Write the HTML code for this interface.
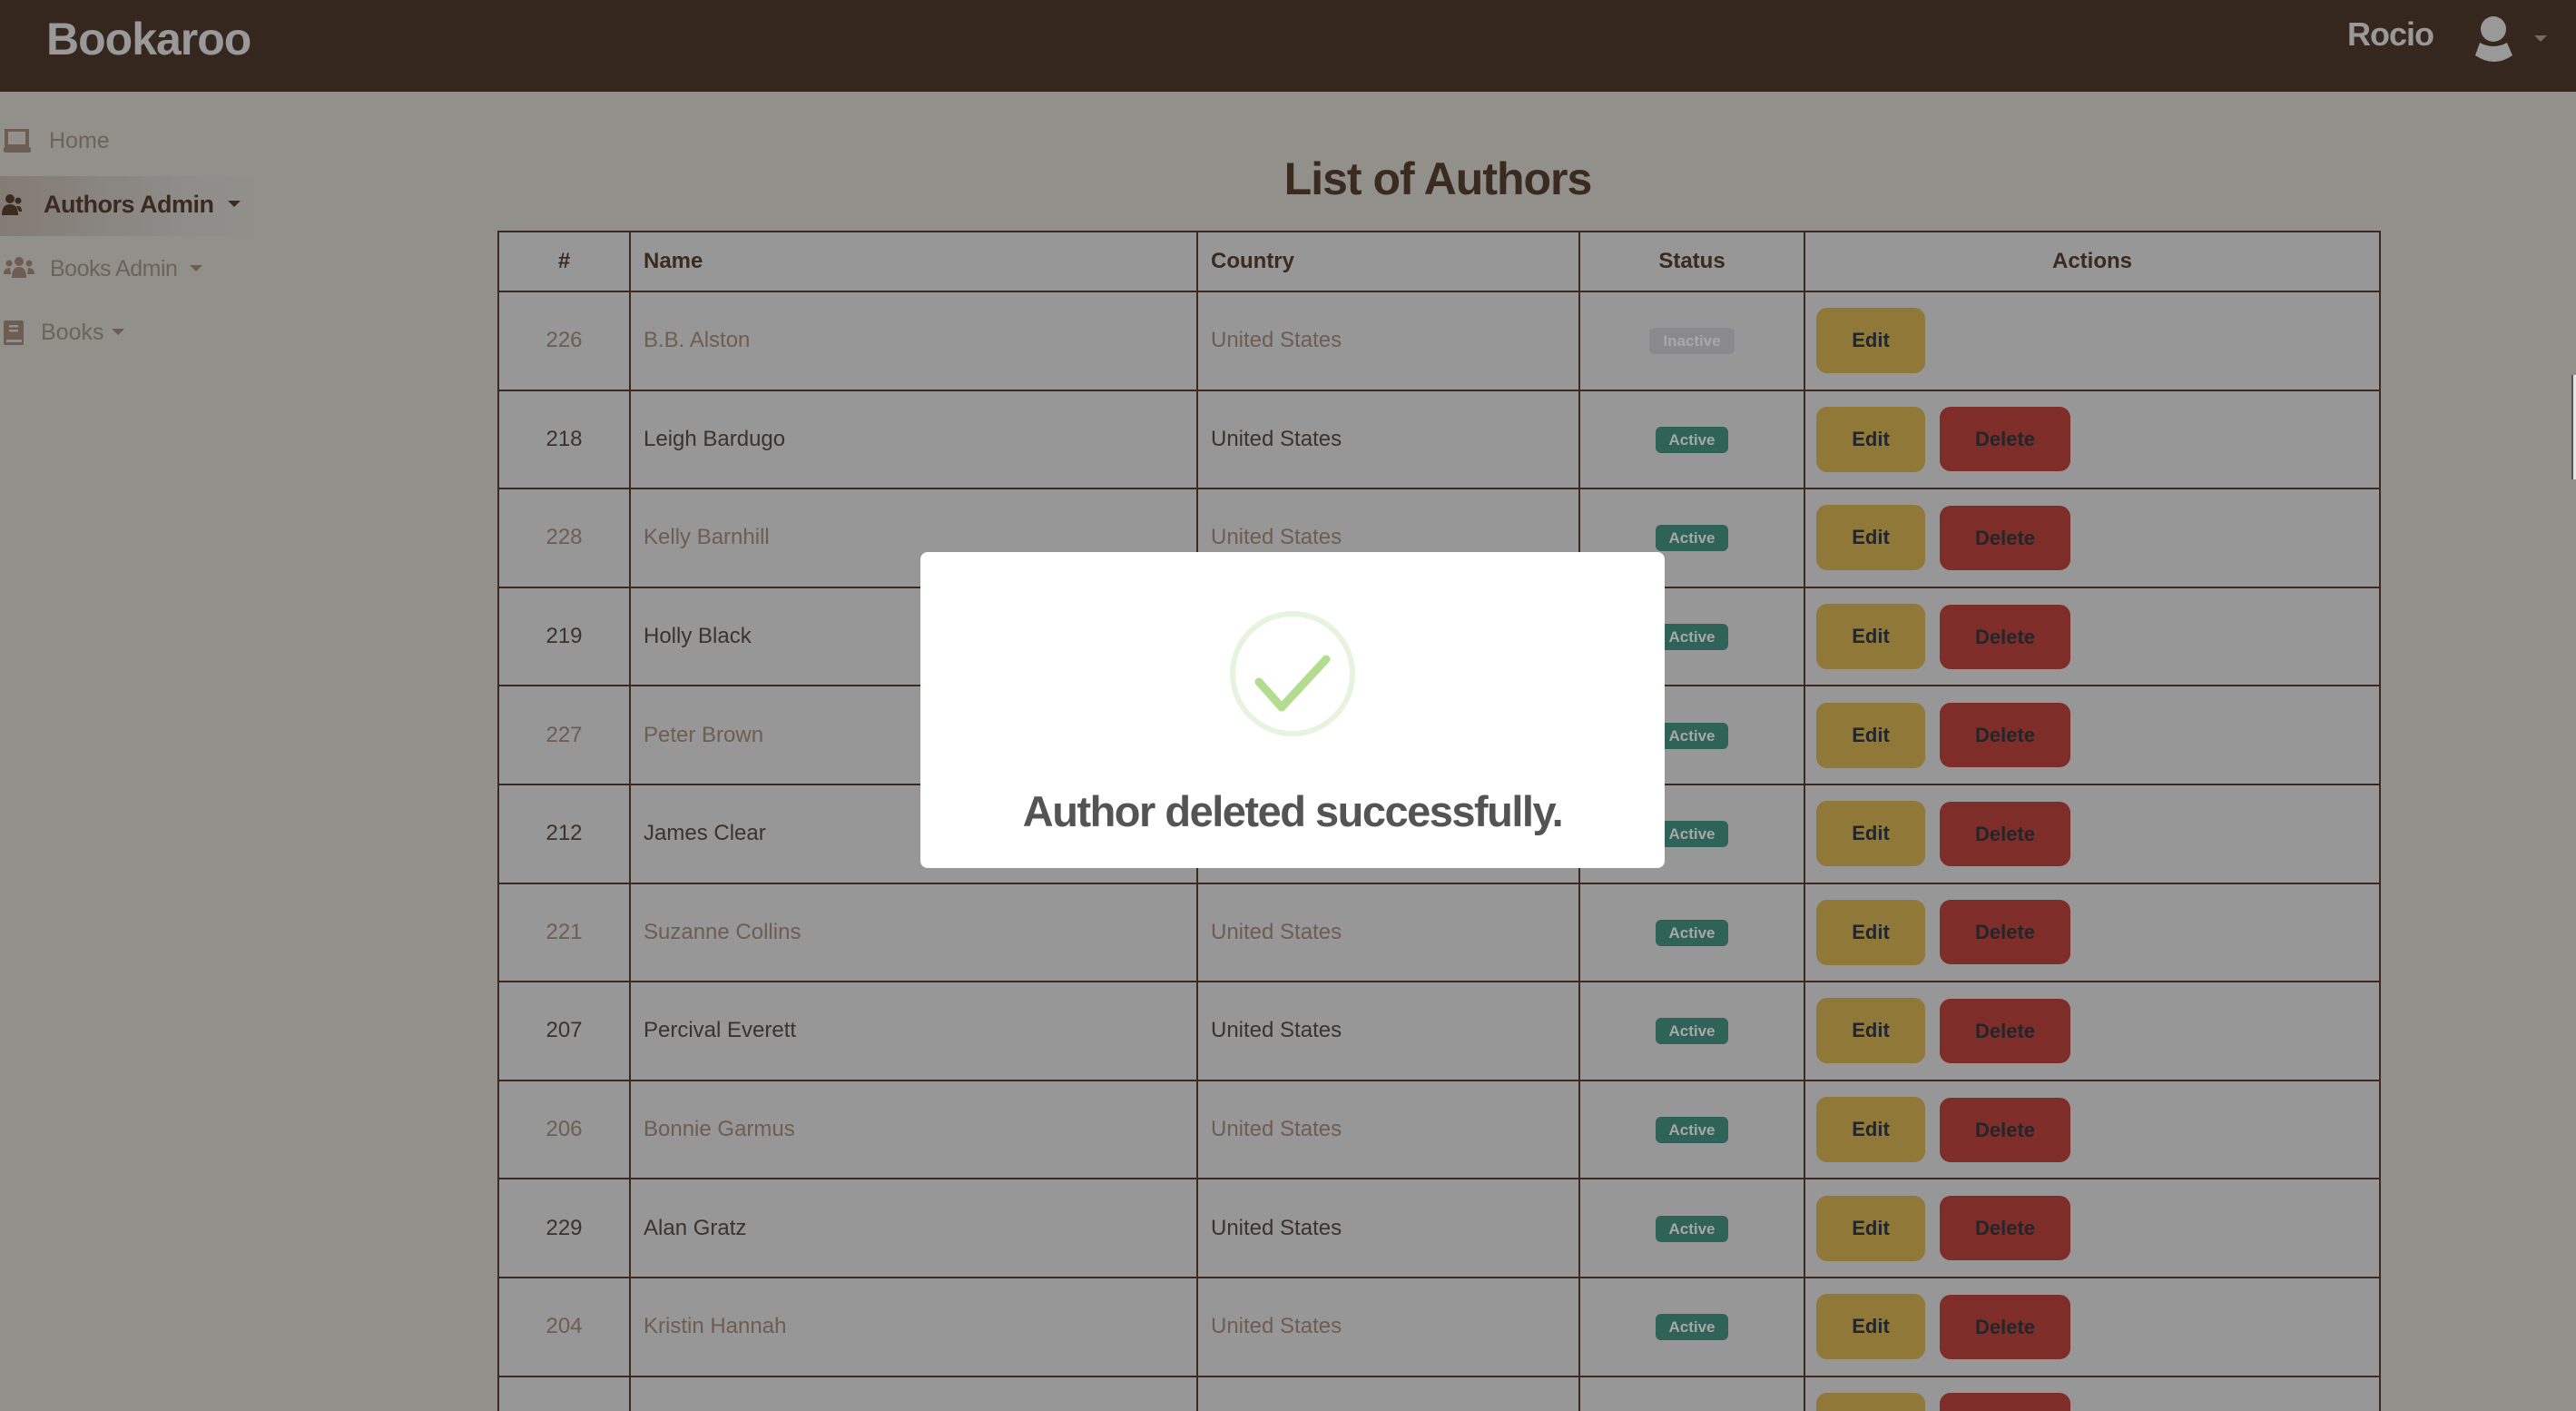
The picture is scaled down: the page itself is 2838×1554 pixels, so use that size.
<!DOCTYPE html>
<html><head><meta charset="utf-8"><style>
*{margin:0;padding:0;box-sizing:border-box}
html{width:2838px;height:1554px;overflow:hidden}
body{width:2838px;height:1554px;overflow:hidden;background:#91908b;font-family:"Liberation Sans",sans-serif;position:relative}
.nav{position:absolute;left:0;top:0;width:2838px;height:101px;background:#36271e}
.logo{position:absolute;left:51px;top:14px;font-size:50px;font-weight:bold;color:#999;letter-spacing:-1px}
.rocio{position:absolute;left:2586px;top:17px;font-size:36px;font-weight:bold;color:#999;letter-spacing:-1px}
.side{position:absolute;color:#6e635b;font-size:25px}
.hl{position:absolute;left:0;top:194px;width:292px;height:66px;background:linear-gradient(90deg,#837b75,#8e8d89 70%,#91908b)}
h1{position:absolute;left:0;width:3168px;top:168px;text-align:center;font-size:50px;color:#3a2a20;font-weight:bold;letter-spacing:-1px}
table{position:absolute;left:548px;top:254px;border-collapse:collapse;background:#979797;table-layout:fixed;width:2073px}
td,th{border:2px solid #3a2a20;font-size:24px;height:108.6px;vertical-align:middle;white-space:nowrap;overflow:hidden}
th{height:66px;color:#3a2a1f;font-weight:bold}
td.n{text-align:center}
td.nm,td.c{padding-left:14px}
td.s{text-align:center}
td.a{padding-left:12px}
th.l{text-align:left;padding-left:14px}
tr.o td{color:#6e5d52}
tr.e td{color:#3a332e}
.b{display:inline-block;width:80px;height:29px;line-height:29px;border-radius:6px;background:#2f6358;color:#a8a8a8;font-size:17px;font-weight:bold;text-align:center}
.b.i{background:#8a8a8e;color:#a8a8a8;width:94px}
.ed,.de{display:inline-block;height:72px;line-height:72px;border-radius:12px;text-align:center;font-size:22px;font-weight:bold;color:#22262b;vertical-align:middle}
.ed{width:120px;background:#8f7838}
.de{width:144px;height:71px;background:#7e2d28;margin-left:16px}
.modal{position:absolute;left:1014px;top:608px;width:820px;height:348px;background:#fff;border-radius:8px}
.msg{position:absolute;left:0;width:820px;top:258px;text-align:center;font-size:47px;font-weight:bold;color:#545454;letter-spacing:-1.5px}
</style></head><body>
<div class="nav">
<div class="logo">Bookaroo</div>
<div class="rocio">Rocio</div>
<svg style="position:absolute;left:2726px;top:17px" width="44" height="52" viewBox="0 0 44 52"><circle cx="21" cy="15" r="14" fill="#999"/><path d="M6 30 Q21 38 36 30 L42 44 Q22 58 1 44 Z" fill="#999"/></svg>
<svg style="position:absolute;left:2792px;top:39px" width="14" height="8"><path d="M0 0H14L7 7Z" fill="#77695e"/></svg>
</div>
<div class="hl"></div>
<svg style="position:absolute;left:4px;top:142px" width="32" height="28" viewBox="0 0 32 28"><rect x="3" y="1" width="23" height="18" fill="none" stroke="#6e5d52" stroke-width="4"/><rect x="0" y="20" width="30" height="6" rx="2" fill="#6e5d52"/></svg>
<div class="side" style="left:54px;top:141px">Home</div>
<svg style="position:absolute;left:0;top:213px" width="24" height="26" viewBox="0 0 24 26"><circle cx="11" cy="6" r="5" fill="#3a2a20"/><circle cx="20" cy="8" r="3.5" fill="#3a2a20"/><path d="M2 24 Q2 12 11 12 Q20 12 20 24Z" fill="#3a2a20"/><path d="M18 14 Q24 13 24 20 H21Z" fill="#3a2a20"/></svg>
<div class="side" style="left:48px;top:210px;font-weight:bold;color:#3a2a20;font-size:27px;letter-spacing:-0.5px">Authors Admin</div>
<svg style="position:absolute;left:251px;top:221px" width="14" height="8"><path d="M0 0H14L7 7Z" fill="#3a2a20"/></svg>
<svg style="position:absolute;left:4px;top:282px" width="34" height="26" viewBox="0 0 34 26"><circle cx="17" cy="6" r="5" fill="#6e5d52"/><circle cx="6" cy="8" r="3.5" fill="#6e5d52"/><circle cx="28" cy="8" r="3.5" fill="#6e5d52"/><path d="M9 24 Q9 12 17 12 Q25 12 25 24Z" fill="#6e5d52"/><path d="M0 20 Q0 13 7 13 L8 20Z M34 20 Q34 13 27 13 L26 20Z" fill="#6e5d52"/></svg>
<div class="side" style="left:55px;top:282px;letter-spacing:-0.5px">Books Admin</div>
<svg style="position:absolute;left:209px;top:292px" width="14" height="8"><path d="M0 0H14L7 7Z" fill="#6e5d52"/></svg>
<svg style="position:absolute;left:4px;top:353px" width="24" height="28" viewBox="0 0 24 28"><rect x="0" y="0" width="22" height="27" rx="2" fill="#6e5d52"/><rect x="6" y="5" width="10" height="2.5" fill="#91908b"/><rect x="6" y="10" width="10" height="2.5" fill="#91908b"/><rect x="3" y="21" width="17" height="3" fill="#91908b"/></svg>
<div class="side" style="left:45px;top:352px">Books</div>
<svg style="position:absolute;left:123px;top:362px" width="14" height="8"><path d="M0 0H14L7 7Z" fill="#6e5d52"/></svg>
<h1>List of Authors</h1>
<table>
<colgroup><col style="width:145px"><col style="width:625px"><col style="width:421px"><col style="width:248px"><col style="width:634px"></colgroup>
<tr><th>#</th><th class="l">Name</th><th class="l">Country</th><th>Status</th><th>Actions</th></tr>
<tr class="o"><td class="n">226</td><td class="nm">B.B. Alston</td><td class="c">United States</td><td class="s"><span class="b i">Inactive</span></td><td class="a"><span class="ed">Edit</span></td></tr>
<tr class="e"><td class="n">218</td><td class="nm">Leigh Bardugo</td><td class="c">United States</td><td class="s"><span class="b">Active</span></td><td class="a"><span class="ed">Edit</span><span class="de">Delete</span></td></tr>
<tr class="o"><td class="n">228</td><td class="nm">Kelly Barnhill</td><td class="c">United States</td><td class="s"><span class="b">Active</span></td><td class="a"><span class="ed">Edit</span><span class="de">Delete</span></td></tr>
<tr class="e"><td class="n">219</td><td class="nm">Holly Black</td><td class="c">United States</td><td class="s"><span class="b">Active</span></td><td class="a"><span class="ed">Edit</span><span class="de">Delete</span></td></tr>
<tr class="o"><td class="n">227</td><td class="nm">Peter Brown</td><td class="c">United States</td><td class="s"><span class="b">Active</span></td><td class="a"><span class="ed">Edit</span><span class="de">Delete</span></td></tr>
<tr class="e"><td class="n">212</td><td class="nm">James Clear</td><td class="c">United States</td><td class="s"><span class="b">Active</span></td><td class="a"><span class="ed">Edit</span><span class="de">Delete</span></td></tr>
<tr class="o"><td class="n">221</td><td class="nm">Suzanne Collins</td><td class="c">United States</td><td class="s"><span class="b">Active</span></td><td class="a"><span class="ed">Edit</span><span class="de">Delete</span></td></tr>
<tr class="e"><td class="n">207</td><td class="nm">Percival Everett</td><td class="c">United States</td><td class="s"><span class="b">Active</span></td><td class="a"><span class="ed">Edit</span><span class="de">Delete</span></td></tr>
<tr class="o"><td class="n">206</td><td class="nm">Bonnie Garmus</td><td class="c">United States</td><td class="s"><span class="b">Active</span></td><td class="a"><span class="ed">Edit</span><span class="de">Delete</span></td></tr>
<tr class="e"><td class="n">229</td><td class="nm">Alan Gratz</td><td class="c">United States</td><td class="s"><span class="b">Active</span></td><td class="a"><span class="ed">Edit</span><span class="de">Delete</span></td></tr>
<tr class="o"><td class="n">204</td><td class="nm">Kristin Hannah</td><td class="c">United States</td><td class="s"><span class="b">Active</span></td><td class="a"><span class="ed">Edit</span><span class="de">Delete</span></td></tr>
<tr class="e"><td class="n"></td><td class="nm"></td><td class="c"></td><td class="s"></td><td class="a"><span class="ed">Edit</span><span class="de">Delete</span></td></tr>
</table>
<div style="position:absolute;left:2833px;top:413px;width:5px;height:115px;background:#e5e5e5;border-left:2px solid #555"></div>
<div class="modal">
<svg style="position:absolute;left:340px;top:64px" width="140" height="140" viewBox="0 0 140 140"><circle cx="70" cy="70" r="66" fill="none" stroke="#e6f4df" stroke-width="6"/><path d="M33 79 L58 107 L107 54" fill="none" stroke="#b3dc8f" stroke-width="9" stroke-linecap="round" stroke-linejoin="round"/></svg>
<div class="msg">Author deleted successfully.</div>
</div>
</body></html>
